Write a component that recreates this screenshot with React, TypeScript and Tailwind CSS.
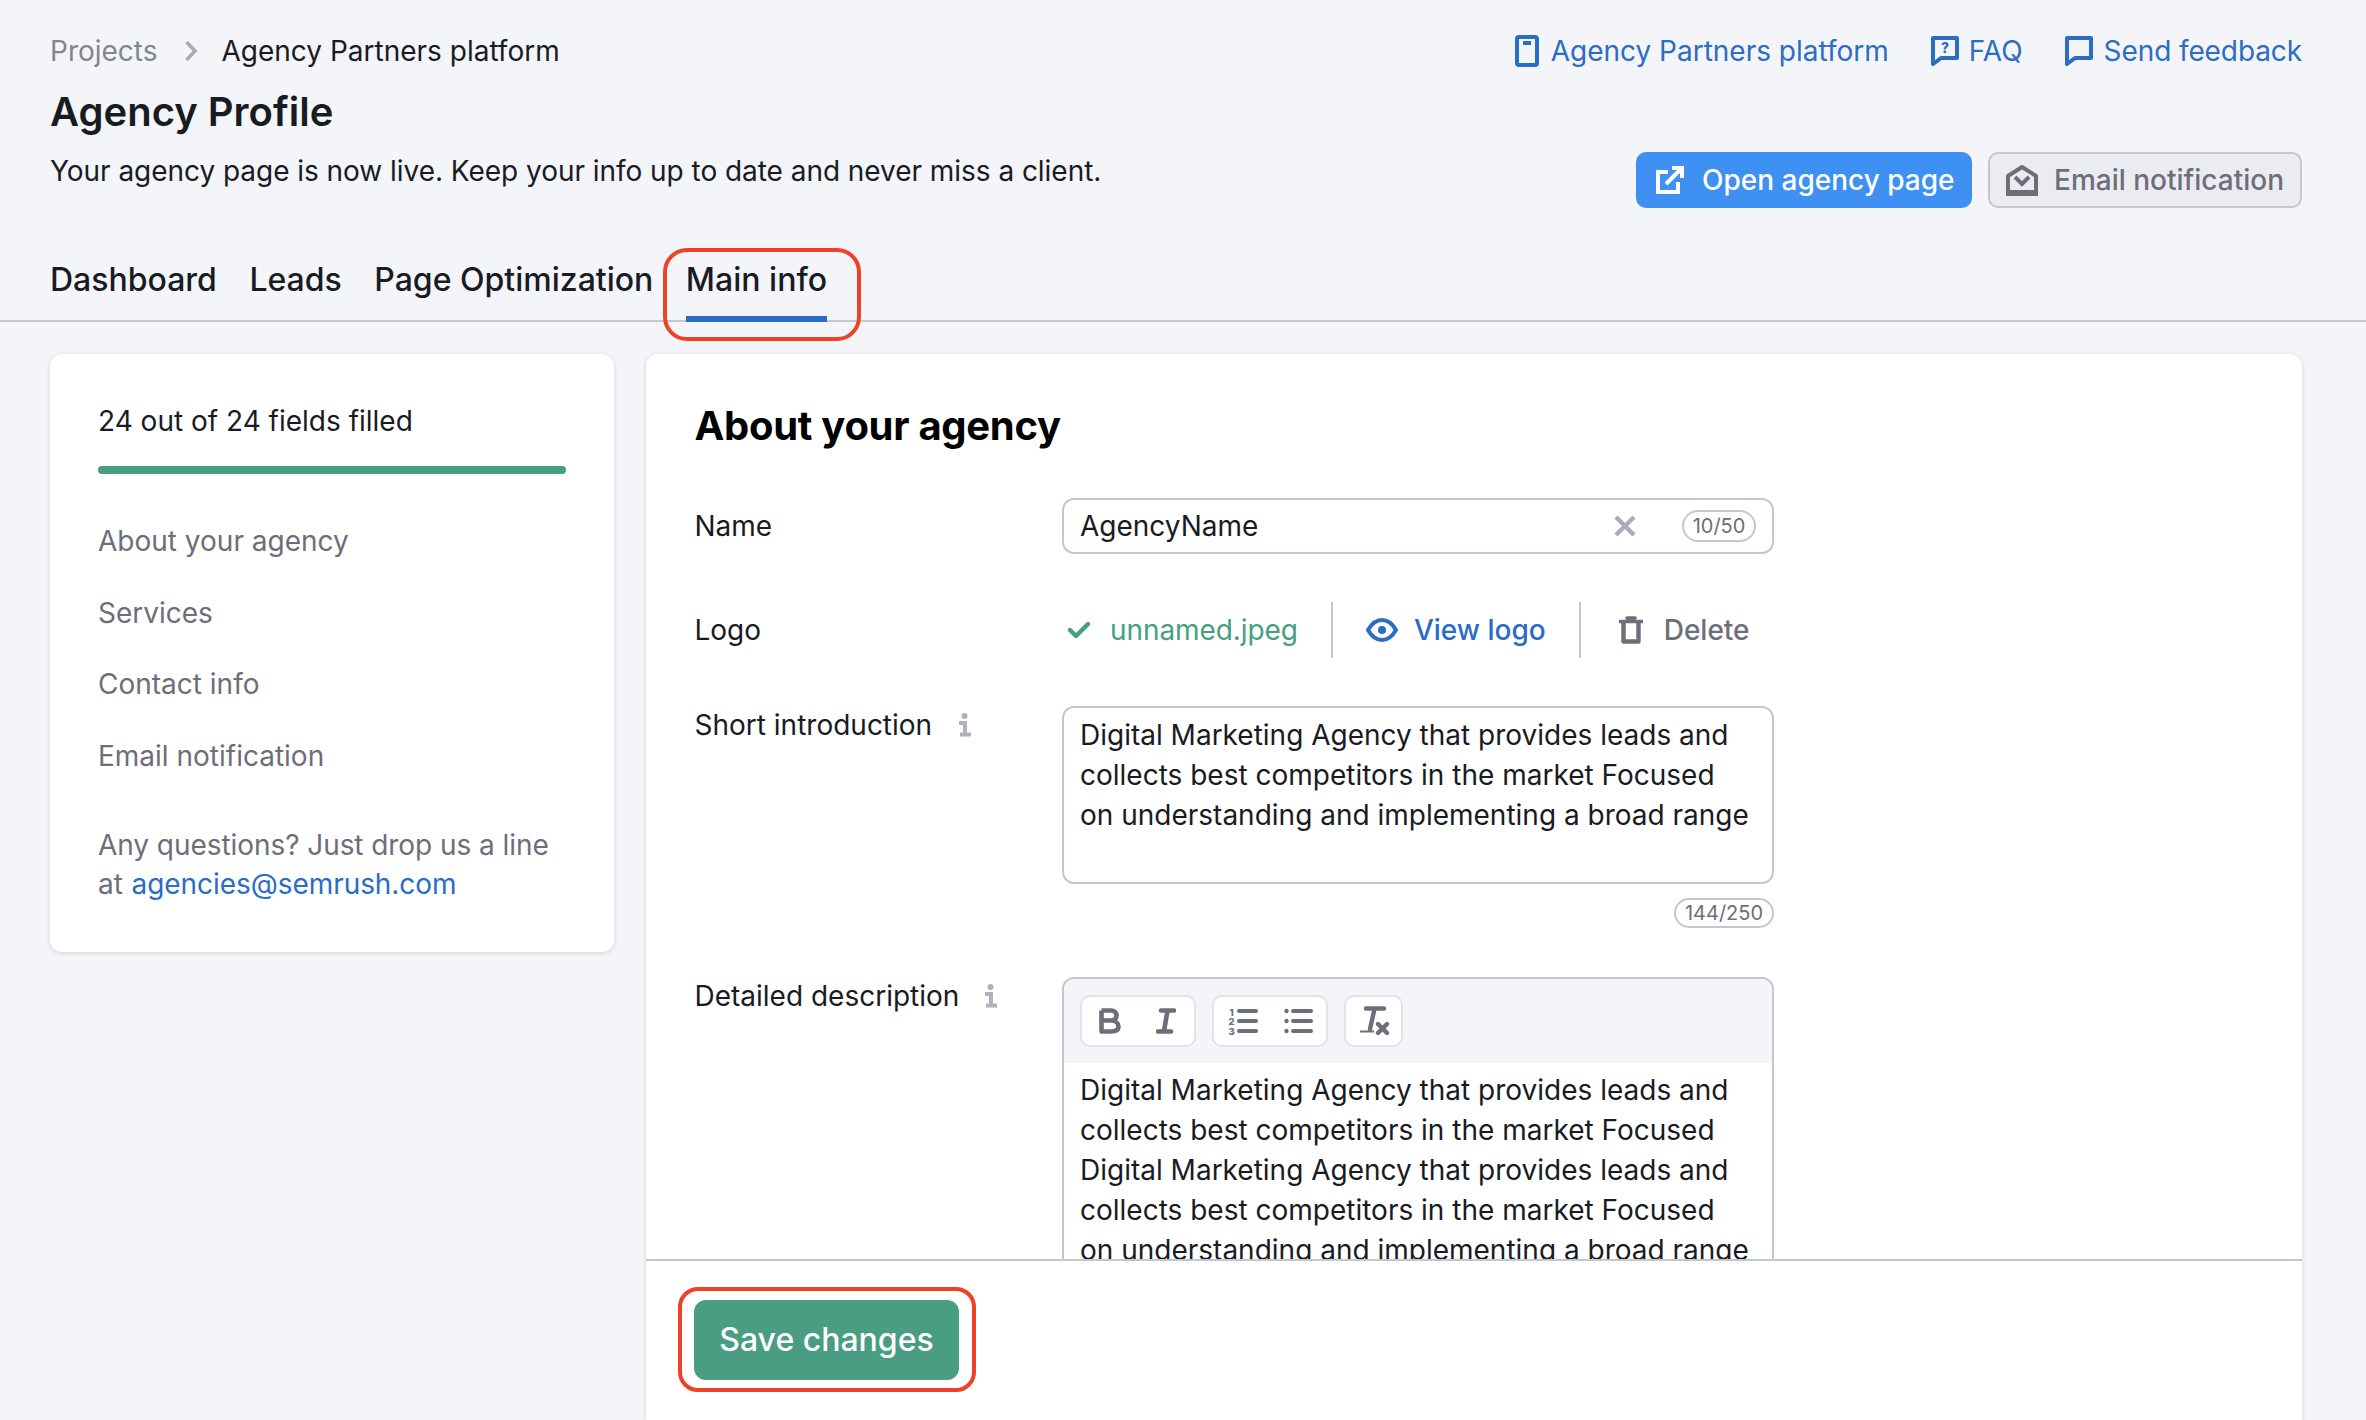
import React from "react";

const BookIcon = () => (
  <svg width="24" height="32" viewBox="0 0 24 32" className="shrink-0">
    <rect x="2" y="2" width="20" height="28" rx="2" fill="none" stroke="#2b6cc4" strokeWidth="4" />
    <rect x="8" y="6" width="8" height="4" fill="#2b6cc4" />
  </svg>
);
const BubbleIcon = ({ q }: { q?: boolean }) => (
  <svg width="28" height="30" viewBox="0 0 28 30" className="shrink-0">
    <path d="M2 2H26V22H10L2 28Z" fill="none" stroke="#2b6cc4" strokeWidth="4" strokeLinejoin="round" />
    {q && (
      <text x="14" y="17" textAnchor="middle" fontFamily="Inter, sans-serif" fontWeight="800" fontSize="14" fill="#2b6cc4">?</text>
    )}
  </svg>
);
const ExtIcon = () => (
  <svg width="28" height="28" viewBox="0 0 28 28" className="shrink-0">
    <path d="M12 6H2V26H22V16" fill="none" stroke="#fff" strokeWidth="4" />
    <path d="M10 18L25 3M16 2H26V12" fill="none" stroke="#fff" strokeWidth="4" />
  </svg>
);
const MailIcon = () => (
  <svg width="32" height="31" viewBox="0 0 32 31" className="shrink-0">
    <path d="M2 11L16 2L30 11V29H2Z" fill="none" stroke="#6c6e79" strokeWidth="4" strokeLinejoin="round" />
    <path d="M9 12L16 19L23 12" fill="none" stroke="#6c6e79" strokeWidth="4" />
    <rect x="0" y="25" width="32" height="6" fill="#6c6e79" />
  </svg>
);
const XIcon = () => (
  <svg width="24" height="24" viewBox="0 0 24 24" className="shrink-0">
    <path d="M3 3L21 21M21 3L3 21" stroke="#a9abb6" strokeWidth="4.4" />
  </svg>
);
const CheckIcon = () => (
  <svg width="24" height="18" viewBox="0 0 24 18" className="shrink-0">
    <path d="M3 9L9 15L21 3" fill="none" stroke="#45a081" strokeWidth="4.4" strokeLinecap="round" strokeLinejoin="round" />
  </svg>
);
const EyeIcon = () => (
  <svg width="32" height="24" viewBox="0 0 32 24" className="shrink-0">
    <path d="M2 12C6 5 11 2 16 2S26 5 30 12C26 19 21 22 16 22S6 19 2 12Z" fill="none" stroke="#2b6cc4" strokeWidth="4" />
    <circle cx="16" cy="12" r="4" fill="#2b6cc4" />
  </svg>
);
const TrashIcon = () => (
  <svg width="24" height="28" viewBox="0 0 24 28" className="shrink-0">
    <path d="M4.5 5V25.5H19.5V5" fill="none" stroke="#6c6e79" strokeWidth="4.4" strokeLinejoin="round" />
    <path d="M1 5.5H23M8 2H16" fill="none" stroke="#6c6e79" strokeWidth="3.6" strokeLinecap="round" />
  </svg>
);
const InfoIcon = () => (
  <svg width="14" height="24" viewBox="0 0 14 24" className="shrink-0">
    <circle cx="6.5" cy="3" r="3" fill="#b0b2bb" />
    <path d="M1 10H7V21.5M2 21.5H13" fill="none" stroke="#b0b2bb" strokeWidth="4" />
  </svg>
);
const BoldIcon = () => (
  <svg width="22" height="26" viewBox="0 0 22 26">
    <path d="M2.5 2.5H12C15.5 2.5 17.5 4.5 17.5 7.5S15.5 12.5 12 12.5H2.5M12 12.5C16.5 12.5 19.5 15 19.5 18.5S16.5 23.5 12 23.5H2.5V2.5" fill="none" stroke="#6c6e79" strokeWidth="4.6" strokeLinejoin="round" />
  </svg>
);
const ItalicIcon = () => (
  <svg width="20" height="26" viewBox="0 0 20 26">
    <path d="M5 2.5H18M2 23.5H15M11.5 3L8 23" fill="none" stroke="#6c6e79" strokeWidth="4.6" strokeLinecap="round" />
  </svg>
);
const OlIcon = () => (
  <svg width="30" height="28" viewBox="0 0 30 28">
    <path d="M11 4H28M11 14H28M11 24H28" stroke="#6c6e79" strokeWidth="4" strokeLinecap="round" />
    <text x="3.5" y="8.5" textAnchor="middle" fontFamily="Inter, sans-serif" fontWeight="800" fontSize="9.5" fill="#6c6e79">1</text>
    <text x="3.5" y="18" textAnchor="middle" fontFamily="Inter, sans-serif" fontWeight="800" fontSize="9.5" fill="#6c6e79">2</text>
    <text x="3.5" y="27.5" textAnchor="middle" fontFamily="Inter, sans-serif" fontWeight="800" fontSize="9.5" fill="#6c6e79">3</text>
  </svg>
);
const UlIcon = () => (
  <svg width="30" height="28" viewBox="0 0 30 28">
    <path d="M9 4H27M9 14H27M9 24H27" stroke="#6c6e79" strokeWidth="4" strokeLinecap="round" />
    <circle cx="2.5" cy="4" r="2.2" fill="#6c6e79" />
    <circle cx="2.5" cy="14" r="2.2" fill="#6c6e79" />
    <circle cx="2.5" cy="24" r="2.2" fill="#6c6e79" />
  </svg>
);
const ClearIcon = () => (
  <svg width="30" height="30" viewBox="0 0 30 30">
    <path d="M6 2.5H24M14.5 3L10 23" fill="none" stroke="#6c6e79" strokeWidth="4.4" strokeLinecap="round" />
    <path d="M0 25.5H14" stroke="#6c6e79" strokeWidth="2" />
    <path d="M18 18L27 27M27 18L18 27" stroke="#6c6e79" strokeWidth="4.4" strokeLinecap="round" />
  </svg>
);
const ChevronIcon = () => (
  <svg width="14" height="22" viewBox="0 0 14 22" className="shrink-0">
    <path d="M2.5 2L11 11L2.5 20" fill="none" stroke="#a9abb6" strokeWidth="3.6" />
  </svg>
);

const LINES = [
  "Digital Marketing Agency that provides leads and",
  "collects best competitors in the market Focused",
];

function Row({ label, infoClass, tall, children }: { label: string; infoClass?: string; tall?: boolean; children: React.ReactNode }) {
  return (
    <div className="flex items-start">
      <div className={tall ? "-mt-[1px] flex w-[367.5px] shrink-0 items-center" : "flex h-[56px] w-[367.5px] shrink-0 items-center"}>
        <span className="leading-[40px]">{label}</span>
        {infoClass && <span className={infoClass}><InfoIcon /></span>}
      </div>
      <div className="w-[712px]">{children}</div>
    </div>
  );
}

export default function App() {
  return (
    <div className="flex h-[1420px] flex-col overflow-hidden bg-[#f4f5f9] font-['Inter',sans-serif] text-[28px] leading-[40px] text-[#191b23]">
      <header className="flex h-[248px] shrink-0 justify-between pl-[50px] pr-[64px] pt-[31px]">
        <div>
          <div className="flex items-center">
            <span className="text-[#83858f]">Projects</span>
            <span className="ml-[26px] mr-[24px]"><ChevronIcon /></span>
            <span>Agency Partners platform</span>
          </div>
          <h1 className="mt-[15px] text-[40px] font-semibold leading-[52px]">Agency Profile</h1>
          <p className="mt-[13px] tracking-[-0.04px]">Your agency page is now live. Keep your info up to date and never miss a client.</p>
        </div>
        <div className="flex flex-col items-end">
          <div className="flex items-center text-[#2b6cc4]">
            <BookIcon />
            <span className="ml-[12px]">Agency Partners platform</span>
            <span className="ml-[42px]"><BubbleIcon q /></span>
            <span className="ml-[10px]">FAQ</span>
            <span className="ml-[42px]"><BubbleIcon /></span>
            <span className="ml-[11px] tracking-[-0.1px]">Send feedback</span>
          </div>
          <div className="mt-[81px] flex gap-[16px]">
            <button className="flex h-[56px] w-[336px] items-center rounded-[10px] bg-[#3e90f3] pl-[20px] font-medium text-white">
              <ExtIcon />
              <span className="ml-[18px]">Open agency page</span>
            </button>
            <button className="flex h-[56px] w-[314px] items-center rounded-[10px] border-2 border-[#c4c7cf] bg-[#ebecf1] pl-[16px] font-medium text-[#6c6e79]">
              <MailIcon />
              <span className="ml-[16px]">Email notification</span>
            </button>
          </div>
        </div>
      </header>

      <nav className="flex h-[74px] shrink-0 gap-[32.5px] border-b-2 border-[#c4c7cf] pl-[50px] text-[32px] font-medium">
        <a className="h-[74px] pt-[12px]">Dashboard</a>
        <a className="h-[74px] pt-[12px]">Leads</a>
        <a className="h-[74px] pt-[12px]">Page Optimization</a>
        <a className="relative h-[74px] border-b-[6px] border-[#2b6cc4] pt-[12px]">
          Main info
          <span className="absolute -bottom-[25px] -left-[23px] -right-[34px] top-0 rounded-[24px] border-4 border-[#ee4128]" />
        </a>
      </nav>

      <main className="flex min-h-0 flex-1 gap-[32px] pl-[50px] pr-[64px] pt-[32px]">
        <aside className="h-[598px] w-[564px] shrink-0 rounded-[12px] bg-white px-[48px] pt-[47px] shadow-[0_1px_4px_rgba(25,27,35,0.16)]">
          <div>24 out of 24 fields filled</div>
          <div className="mt-[25px] h-[8px] w-[468px] rounded-full bg-[#45a081]" />
          <ul className="mt-[47px] flex flex-col gap-[31.7px] text-[#6c6e79]">
            <li>About your agency</li>
            <li>Services</li>
            <li>Contact info</li>
            <li>Email notification</li>
          </ul>
          <p className="mt-[49.5px] leading-[39px] tracking-[-0.06px] text-[#6c6e79]">
            Any questions? Just drop us a line
            <br />
            at <a className="ml-[1px] text-[#2b6cc4]">agencies@semrush.com</a>
          </p>
        </aside>

        <section className="flex min-w-0 flex-1 flex-col rounded-t-[12px] bg-white shadow-[0_1px_4px_rgba(25,27,35,0.16)]">
          <div className="min-h-0 flex-1 overflow-hidden pl-[48.5px] pt-[46px]">
            <h2 className="text-[40px] font-bold leading-[52px] tracking-[-0.3px] text-black">About your agency</h2>

            <div className="mt-[46px]">
              <Row label="Name">
                <div className="flex h-[56px] items-center rounded-[12px] border-2 border-[#c4c7cf] pl-[16px] pr-[16px]">
                  <span className="flex-1">AgencyName</span>
                  <XIcon />
                  <span className="ml-[45px] flex h-[32px] w-[74px] items-center justify-center rounded-full border-2 border-[#c4c7cf] text-[20px] text-[#6c6e79]">10/50</span>
                </div>
              </Row>
            </div>

            <div className="mt-[48px]">
              <Row label="Logo">
                <div className="flex h-[56px] items-center">
                  <span className="ml-[5px]"><CheckIcon /></span>
                  <span className="ml-[19px] tracking-[-0.08px] text-[#45a081]">unnamed.jpeg</span>
                  <span className="ml-[33px] h-[56px] w-[2px] bg-[#c4c7cf]" />
                  <span className="ml-[33px]"><EyeIcon /></span>
                  <span className="ml-[16px] font-medium text-[#2b6cc4]">View logo</span>
                  <span className="ml-[33px] h-[56px] w-[2px] bg-[#c4c7cf]" />
                  <span className="ml-[38px]"><TrashIcon /></span>
                  <span className="ml-[21px] font-medium text-[#6c6e79]">Delete</span>
                </div>
              </Row>
            </div>

            <div className="mt-[48px]">
              <Row label="Short introduction" infoClass="ml-[26px]" tall>
                <div className="h-[178px] rounded-[12px] border-2 border-[#c4c7cf] px-[16px] py-[7px]">
                  {LINES[0]}
                  <br />
                  {LINES[1]}
                  <br />
                  on understanding and implementing a broad range
                </div>
                <div className="mt-[14px] flex justify-end">
                  <span className="flex h-[30px] w-[100px] items-center justify-center rounded-full border-2 border-[#c4c7cf] text-[20px] text-[#6c6e79]">144/250</span>
                </div>
              </Row>
            </div>

            <div className="mt-[49px]">
              <Row label="Detailed description" infoClass="ml-[25px]" tall>
                <div className="rounded-t-[12px] border-x-2 border-t-2 border-[#c4c7cf]">
                  <div className="flex h-[84px] items-start gap-[16px] rounded-t-[10px] bg-[#f4f5f9] pl-[16px] pt-[16px]">
                    <div className="flex h-[52px] w-[116px] items-center rounded-[10px] border-2 border-[#e2e3ea] bg-white pl-[17px]">
                      <BoldIcon />
                      <span className="ml-[35px]"><ItalicIcon /></span>
                    </div>
                    <div className="flex h-[52px] w-[116px] items-center rounded-[10px] border-2 border-[#e2e3ea] bg-white pl-[14px]">
                      <OlIcon />
                      <span className="ml-[26px]"><UlIcon /></span>
                    </div>
                    <div className="flex h-[52px] w-[59px] items-center rounded-[10px] border-2 border-[#e2e3ea] bg-white pl-[14px]">
                      <ClearIcon />
                    </div>
                  </div>
                  <div className="px-[16px] pt-[7px]">
                    {LINES[0]}
                    <br />
                    {LINES[1]}
                    <br />
                    {LINES[0]}
                    <br />
                    {LINES[1]}
                    <br />
                    on understanding and implementing a broad range
                  </div>
                </div>
              </Row>
            </div>
          </div>

          <div className="h-[161px] shrink-0 border-t-2 border-[#c4c7cf] pl-[48px] pt-[39px]">
            <button className="relative h-[80px] w-[265px] rounded-[12px] bg-[#489d82] text-[32px] font-medium text-white">
              Save changes
              <span className="absolute -bottom-[12px] -left-[16px] -right-[17px] -top-[13px] rounded-[20px] border-4 border-[#ee4128]" />
            </button>
          </div>
        </section>
      </main>
    </div>
  );
}
